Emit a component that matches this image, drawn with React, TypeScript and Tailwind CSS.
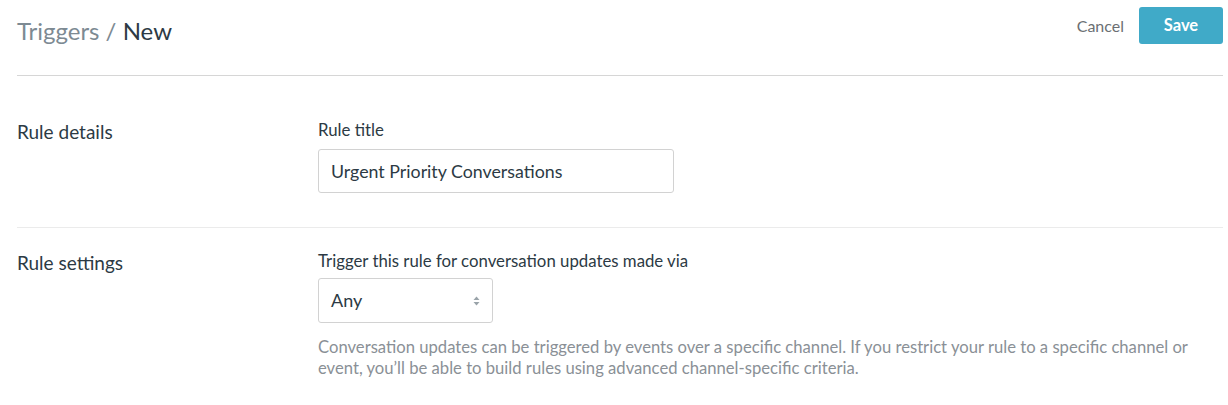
import React from 'react';

const font = { fontFamily: 'Lato, "Noto Sans", sans-serif' };

function Section({ title, children, first }: { title: string; children: React.ReactNode; first?: boolean }) {
  return (
    <div className={first ? 'flex pt-[44px] pb-[34px] border-b border-[#ebebeb]' : 'flex pt-[23px] pb-6'}>
      <div className="w-[301px] shrink-0 text-[19px] leading-[24px] text-[#2c3a44]">{title}</div>
      <div className="flex-1">{children}</div>
    </div>
  );
}

export default function App() {
  return (
    <div className="min-h-[405px] bg-white pl-[17px] pr-[5px]" style={font}>
      <div className="flex items-start justify-between h-[76px] border-b border-[#d6d6d6] pt-[7px]">
        <h1 className="mt-[5px] text-[24px] leading-[37px] text-[#2d3a44]">
          <span className="text-[#7d8a93]">Triggers / </span>New
        </h1>
        <div className="flex items-center gap-[15px]">
          <button className="text-[16px] text-[#6b6f73]">Cancel</button>
          <button className="h-[37px] w-[84px] rounded-[3px] bg-[#40aac8] text-[16.5px] font-bold text-white">
            Save
          </button>
        </div>
      </div>

      <Section title="Rule details" first>
        <label className="block text-[16.8px] leading-[20px] text-[#2c3a44]">Rule title</label>
        <input
          readOnly
          value="Urgent Priority Conversations"
          className="mt-[9px] h-[44px] w-[356px] rounded-[3px] border border-[#d2d2d2] px-3 text-[17.8px] text-[#2c3a44] outline-none"
          style={font}
        />
      </Section>

      <Section title="Rule settings">
        <label className="block text-[16.8px] leading-[20px] text-[#2c3a44]">
          Trigger this rule for conversation updates made via
        </label>
        <div className="mt-[7px] flex h-[45px] w-[175px] items-center justify-between rounded-[3px] border border-[#d2d2d2] pl-3 pr-[12px]">
          <span className="text-[18px] text-[#2c3a44]">Any</span>
          <svg width="7" height="10" viewBox="0 0 7 10" fill="#9aa3a9">
            <path d="M3.5 0.5 L6.5 4 H0.5 Z" />
            <path d="M3.5 9.5 L6.5 6 H0.5 Z" />
          </svg>
        </div>
        <p className="mt-[14px] text-[16.65px] leading-[21px] text-[#8a9096]">
          Conversation updates can be triggered by events over a specific channel. If you restrict your rule to a specific channel or
          event, you’ll be able to build rules using advanced channel-specific criteria.
        </p>
      </Section>
    </div>
  );
}
